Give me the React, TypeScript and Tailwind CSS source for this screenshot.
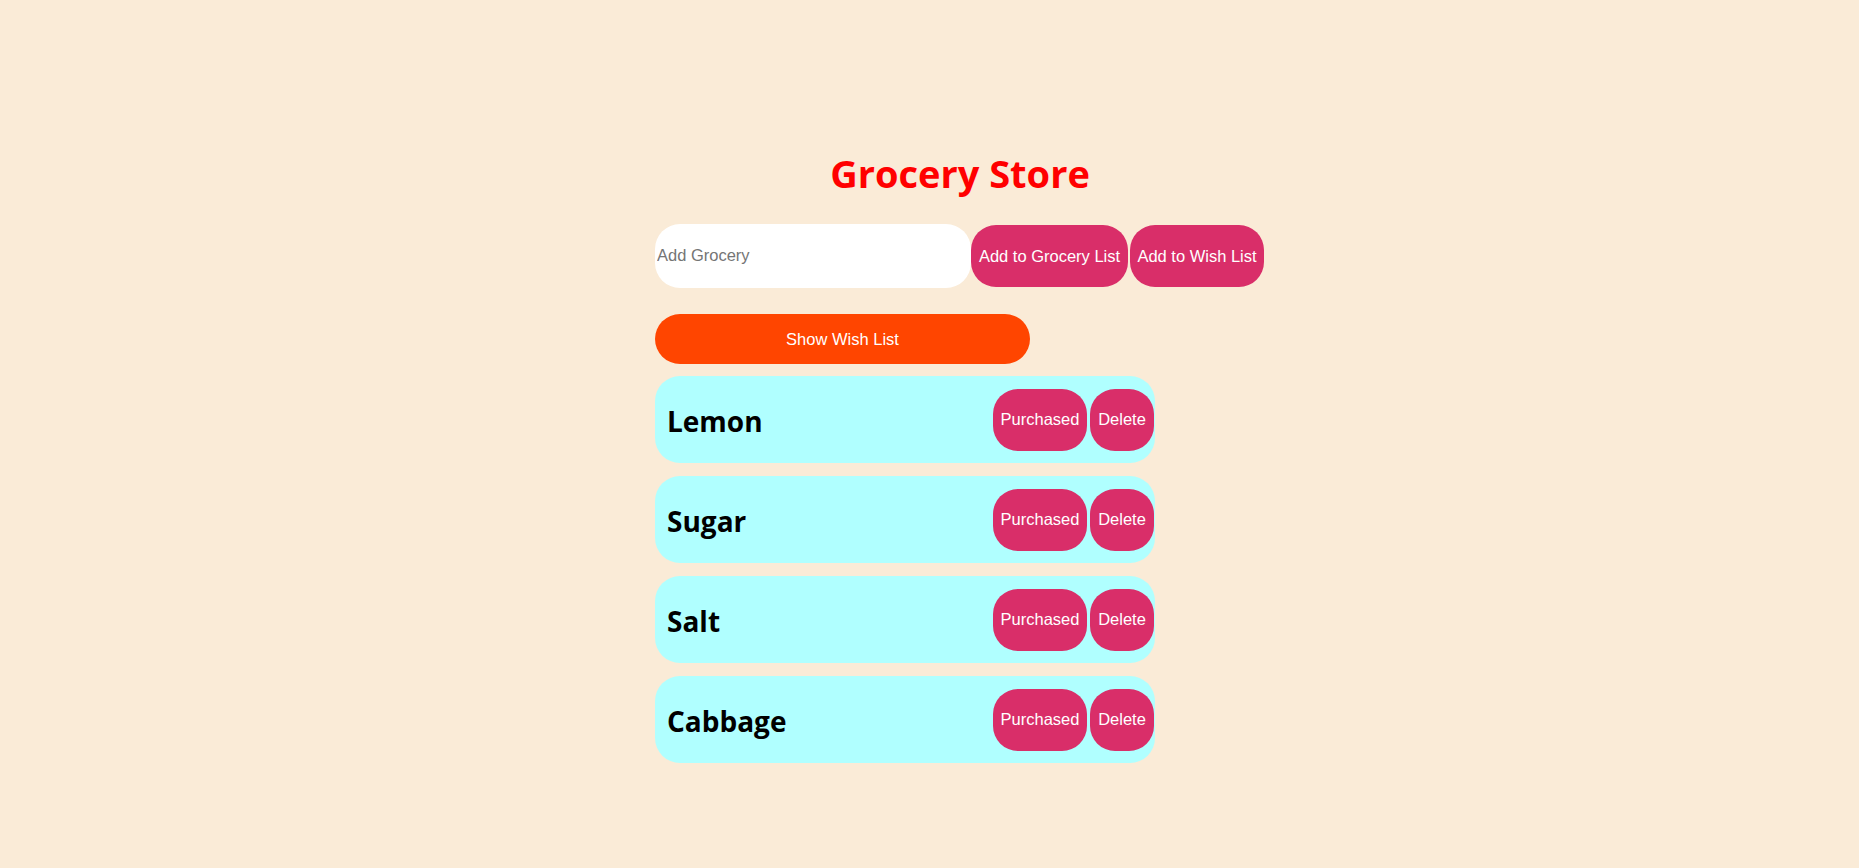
import React from "react";

const items = ["Lemon", "Sugar", "Salt", "Cabbage"];

export default function App() {
  return (
    <div className="min-h-[868px] w-full bg-[#faebd7] pl-[655px] pt-[149px] font-['Liberation_Sans',Arial,sans-serif]">
      <div className="flex w-[610px] flex-col">
        <h1 className="text-center font-['Open_Sans',sans-serif] text-[38px] font-bold leading-[48px] text-[#ff0000]">
          Grocery Store
        </h1>
        <div className="mt-[27px] flex items-center">
          <input
            type="text"
            placeholder="Add Grocery"
            className="h-[64px] w-[316px] rounded-[25px] bg-white px-[2px] pb-[2px] text-[16.5px] text-black outline-none placeholder:text-[#757575]"
          />
          <button className="h-[62px] w-[157px] rounded-[25px] bg-[#d92e69] text-[16.5px] text-white">
            Add to Grocery List
          </button>
          <button className="ml-[2px] h-[62px] w-[134px] rounded-[25px] bg-[#d92e69] text-[16.5px] text-white">
            Add to Wish List
          </button>
        </div>
        <button className="mt-[26px] h-[50px] w-[375px] rounded-[25px] bg-[#ff4500] text-[16.5px] text-white">
          Show Wish List
        </button>
        <div className="mt-[12px] flex w-[500px] flex-col gap-[13px]">
          {items.map((name) => (
            <div
              key={name}
              className="flex h-[87px] items-center justify-between rounded-[25px] bg-[#b0ffff] pl-[12px] pr-[1px]"
            >
              <span className="pt-[2px] font-['Open_Sans',sans-serif] text-[28px] font-bold text-black">
                {name}
              </span>
              <div className="flex items-center gap-[3px]">
                <button className="h-[62px] w-[94px] rounded-[25px] bg-[#d92e69] text-[16.5px] text-white">
                  Purchased
                </button>
                <button className="h-[62px] w-[64px] rounded-[25px] bg-[#d92e69] text-[16.5px] text-white">
                  Delete
                </button>
              </div>
            </div>
          ))}
        </div>
      </div>
    </div>
  );
}
